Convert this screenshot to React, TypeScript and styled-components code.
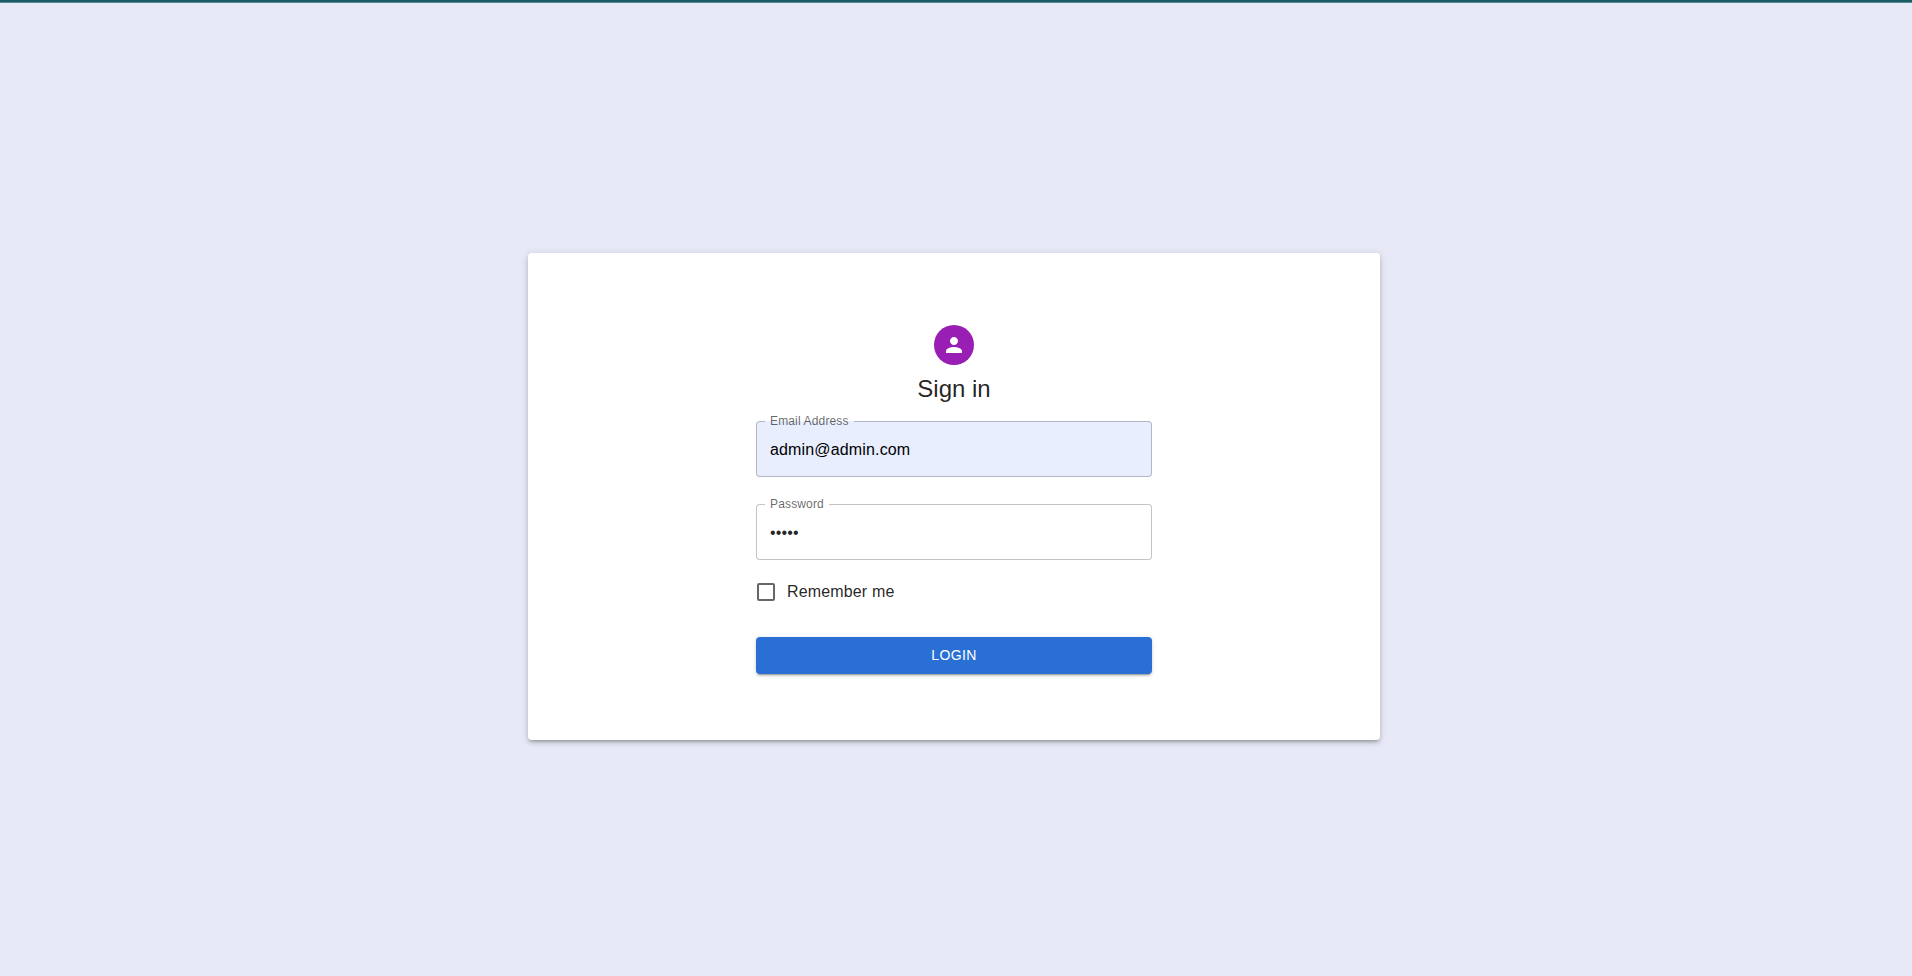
import React, { useState } from "react";
import styled, { createGlobalStyle } from "styled-components";

const GlobalStyle = createGlobalStyle`
  *, *::before, *::after { box-sizing: border-box; }
  body {
    margin: 0;
    background: #e7e9f6;
    color: rgba(0, 0, 0, 0.87);
    font-family: "Liberation Sans", Arial, sans-serif;
    font-size: 16px;
    line-height: 24px;
    letter-spacing: 0.00938em;
    -webkit-font-smoothing: antialiased;
  }
`;

const Page = styled.div`
  display: flex;
  flex-direction: column;
  min-height: 100vh;
`;

const TopBar = styled.header`
  height: 3px;
  background: #1c5a66;
  border-bottom: 1px solid #5a8c98;
`;

const Main = styled.main`
  flex: 1;
  display: flex;
  align-items: center;
  justify-content: center;
  padding: 14px 4px 0 0;
`;

const Card = styled.section`
  display: flex;
  justify-content: center;
  width: 100%;
  max-width: 852px;
  padding: 72px 24px 66px;
  border-radius: 4px;
  background: #fff;
  box-shadow:
    0 3px 3px -2px rgba(0, 0, 0, 0.2),
    0 3px 4px 0 rgba(0, 0, 0, 0.14),
    0 1px 8px 0 rgba(0, 0, 0, 0.12);
`;

const Form = styled.form`
  display: flex;
  flex-direction: column;
  width: 100%;
  max-width: 396px;
`;

const Avatar = styled.div`
  display: flex;
  align-items: center;
  justify-content: center;
  align-self: center;
  width: 40px;
  height: 40px;
  border-radius: 50%;
  background: #981eb4;
  color: #fff;
`;

const Title = styled.h1`
  margin: 8px 0 16px;
  font-size: 24px;
  font-weight: 400;
  line-height: 32px;
  letter-spacing: 0;
  text-align: center;
`;

const Fields = styled.div`
  display: flex;
  flex-direction: column;
  gap: 27px;
`;

const Field = styled.div`
  position: relative;
`;

const FieldLabel = styled.label<{ $fill: string }>`
  position: absolute;
  top: -8px;
  left: 9px;
  padding: 0 5px;
  background: linear-gradient(#fff 50%, ${(p) => p.$fill} 50%);
  color: rgba(0, 0, 0, 0.6);
  font-size: 12px;
  line-height: 16px;
`;

const TextInput = styled.input<{ $fill: string }>`
  display: block;
  width: 100%;
  height: 56px;
  padding: 2px 13px 0;
  border: 1px solid rgba(0, 0, 0, 0.23);
  border-radius: 4px;
  background: ${(p) => p.$fill};
  color: ${(p) => (p.type === "email" ? "#000" : "rgba(0, 0, 0, 0.87)")};
  font: inherit;
  letter-spacing: inherit;
  outline: none;

  &:focus {
    border-color: #2a6fd4;
  }
`;

const Remember = styled.label`
  display: flex;
  align-items: center;
  gap: 12px;
  align-self: flex-start;
  height: 42px;
  margin: 11px 0 24px 1px;
  cursor: pointer;
`;

const Checkbox = styled.input`
  appearance: none;
  width: 18px;
  height: 18px;
  margin: 0;
  border: 2px solid rgba(0, 0, 0, 0.6);
  border-radius: 2px;
  cursor: pointer;

  &:checked {
    border-color: #2a6fd4;
    background: #2a6fd4;
  }
`;

const LoginButton = styled.button`
  height: 37px;
  padding: 0 16px 1px;
  border: 0;
  border-radius: 4px;
  background: #2a6fd4;
  color: #fff;
  font: inherit;
  font-size: 14px;
  letter-spacing: 0.02857em;
  text-transform: uppercase;
  cursor: pointer;
  box-shadow:
    0 3px 1px -2px rgba(0, 0, 0, 0.2),
    0 2px 2px 0 rgba(0, 0, 0, 0.14),
    0 1px 5px 0 rgba(0, 0, 0, 0.12);
`;

const WHITE = "#fff";
const AUTOFILL = "#e8eefe";

function PersonIcon() {
  return (
    <svg width="24" height="24" viewBox="0 0 24 24" fill="currentColor" aria-hidden="true">
      <path d="M12 12c2.21 0 4-1.79 4-4s-1.79-4-4-4-4 1.79-4 4 1.79 4 4 4zm0 2c-2.67 0-8 1.34-8 4v2h16v-2c0-2.66-5.33-4-8-4z" />
    </svg>
  );
}

export default function App() {
  const [email, setEmail] = useState("admin@admin.com");
  const [password, setPassword] = useState("admin");

  return (
    <>
      <GlobalStyle />
      <Page>
        <TopBar />
        <Main>
          <Card>
            <Form onSubmit={(e) => e.preventDefault()}>
              <Avatar>
                <PersonIcon />
              </Avatar>
              <Title>Sign in</Title>
              <Fields>
                <Field>
                  <TextInput
                    id="email"
                    type="email"
                    $fill={AUTOFILL}
                    value={email}
                    onChange={(e) => setEmail(e.target.value)}
                  />
                  <FieldLabel htmlFor="email" $fill={AUTOFILL}>Email Address</FieldLabel>
                </Field>
                <Field>
                  <TextInput
                    id="password"
                    type="password"
                    $fill={WHITE}
                    value={password}
                    onChange={(e) => setPassword(e.target.value)}
                  />
                  <FieldLabel htmlFor="password" $fill={WHITE}>Password</FieldLabel>
                </Field>
              </Fields>
              <Remember>
                <Checkbox type="checkbox" />
                Remember me
              </Remember>
              <LoginButton type="submit">Login</LoginButton>
            </Form>
          </Card>
        </Main>
      </Page>
    </>
  );
}
